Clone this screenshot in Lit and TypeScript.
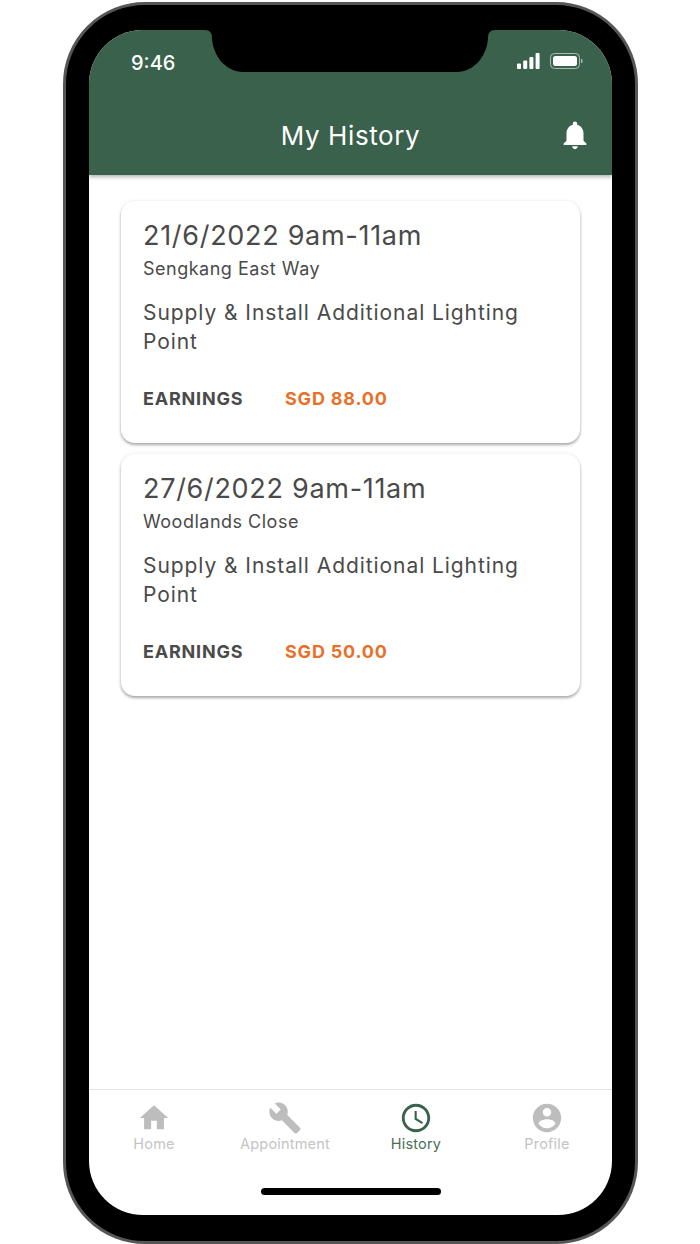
import { LitElement, html, css, svg } from 'lit';
import { customElement } from 'lit/decorators.js';

const jobs = [
  { when: '21/6/2022 9am-11am', place: 'Sengkang East Way', desc: 'Supply & Install Additional Lighting Point', pay: 'SGD 88.00' },
  { when: '27/6/2022 9am-11am', place: 'Woodlands Close', desc: 'Supply & Install Additional Lighting Point', pay: 'SGD 50.00' },
];

const tabs = [
  { label: 'Home', icon: svg`<path d="M10 20v-6h4v6h5v-8h3L12 3 2 12h3v8z"/>` },
  { label: 'Appointment', icon: svg`<path d="M22.7 19l-9.1-9.1c.9-2.3.4-5-1.5-6.9-2-2-5-2.4-7.4-1.3L9 6 6 9 1.6 4.7C.4 7.1.9 10.1 2.9 12.1c1.9 1.9 4.6 2.4 6.9 1.5l9.1 9.1c.4.4 1 .4 1.4 0l2.3-2.3c.5-.4.5-1.1.1-1.4z"/>` },
  { label: 'History', active: true, icon: svg`<path d="M11.99 2C6.47 2 2 6.48 2 12s4.47 10 9.99 10C17.52 22 22 17.52 22 12S17.52 2 11.99 2zM12 20c-4.42 0-8-3.58-8-8s3.58-8 8-8 8 3.58 8 8-3.58 8-8 8zm.5-13H11v6l5.25 3.15.75-1.23-4.5-2.67z"/>` },
  { label: 'Profile', icon: svg`<path d="M12 2C6.48 2 2 6.48 2 12s4.48 10 10 10 10-4.48 10-10S17.52 2 12 2zm0 3c1.66 0 3 1.34 3 3s-1.34 3-3 3-3-1.34-3-3 1.34-3 3-3zm0 14.2c-2.5 0-4.71-1.28-6-3.22.03-1.99 4-3.08 6-3.08 1.99 0 5.97 1.09 6 3.08-1.29 1.94-3.5 3.22-6 3.22z"/>` },
];

@customElement('app-root')
export class AppRoot extends LitElement {
  static styles = css`
    :host {
      display: block;
      width: 700px;
      height: 1244px;
      background: #fff;
      font-family: Inter, Roboto, "Liberation Sans", sans-serif;
      overflow: hidden;
    }
    .phone {
      box-sizing: border-box;
      width: 575px;
      height: 1242px;
      margin: 2px 0 0 63px;
      padding: 25px 23px 0 23px;
      background: #000;
      border: 3px solid #565656;
      border-radius: 82px;
    }
    .screen {
      position: relative;
      height: 1185px;
      border-radius: 54px;
      overflow: hidden;
      background: #fff;
      display: flex;
      flex-direction: column;
    }
    .notch {
      position: absolute;
      top: 0;
      left: 116px;
      width: 290px;
      height: 42px;
      fill: #000;
      z-index: 2;
    }
    .header {
      background: #3a614b;
      height: 145px;
      flex: none;
      color: #fff;
      box-shadow: 0 2px 4px rgba(0, 0, 0, 0.3);
      display: flex;
      flex-direction: column;
      z-index: 1;
    }
    .status {
      height: 62px;
      padding: 21px 29px 0 42px;
      box-sizing: border-box;
      display: flex;
      justify-content: space-between;
      align-items: flex-start;
      font-size: 20px;
      font-weight: 500;
    }
    .status-icons {
      display: flex;
      gap: 10px;
      padding-top: 2px;
    }
    .title-row {
      position: relative;
      text-align: center;
      font-size: 26px;
      letter-spacing: 0.6px;
      line-height: 32px;
      padding-top: 28px;
    }
    .bell {
      position: absolute;
      right: 20px;
      top: 26px;
      width: 34px;
      height: 34px;
      fill: #fff;
    }
    .list {
      flex: 1;
      padding: 26px 32px 0 32px;
      display: flex;
      flex-direction: column;
      gap: 11px;
    }
    .card {
      background: #fff;
      border-radius: 14px;
      padding: 19px 22px 0 22px;
      height: 242px;
      box-sizing: border-box;
      color: #4a4a4a;
      box-shadow: 0 2px 3px rgba(0, 0, 0, 0.32), 0 0 4px rgba(0, 0, 0, 0.07);
    }
    .when {
      font-size: 27px;
      line-height: 32px;
      letter-spacing: 0.7px;
    }
    .place {
      font-size: 18px;
      line-height: 22px;
      letter-spacing: 0.5px;
      margin-top: 6px;
    }
    .desc {
      font-size: 21px;
      line-height: 29px;
      letter-spacing: 0.93px;
      margin-top: 17.5px;
    }
    .earn {
      display: flex;
      margin-top: 32px;
      font-size: 18px;
      line-height: 22px;
      font-weight: 700;
      letter-spacing: 0.8px;
    }
    .earn-label {
      width: 142px;
    }
    .pay {
      color: #e8702a;
    }
    .nav {
      height: 126px;
      flex: none;
      border-top: 1px solid #e4e4e4;
      box-sizing: border-box;
      display: grid;
      grid-template-columns: repeat(4, 131px);
      justify-content: center;
      padding-top: 11px;
      position: relative;
    }
    .tab {
      display: flex;
      flex-direction: column;
      align-items: center;
      color: #c4c4c4;
      font-size: 14.5px;
      letter-spacing: 0.2px;
    }
    .tab svg {
      width: 34px;
      height: 34px;
      fill: #bdbdbd;
    }
    .tab.active {
      color: #4a7059;
    }
    .tab.active svg {
      fill: #3a614b;
    }
    .tab span {
      line-height: 18px;
    }
    .home-bar {
      position: absolute;
      left: 172px;
      bottom: 20px;
      width: 180px;
      height: 7px;
      border-radius: 4px;
      background: #000;
    }
  `;

  render() {
    return html`
      <div class="phone">
        <div class="screen">
          <div class="header">
            <div class="status">
              <span>9:46</span>
              <div class="status-icons">
                <svg width="24" height="17" viewBox="0 0 24 17" fill="#fff">
                  <rect x="1" y="10.5" width="4" height="5.5" rx="1" />
                  <rect x="7.2" y="7.5" width="4" height="8.5" rx="1" />
                  <rect x="13.4" y="4" width="4" height="12" rx="1" />
                  <rect x="19.6" y="0" width="4" height="16" rx="1" />
                </svg>
                <svg width="33" height="17" viewBox="0 0 33 17">
                  <rect x="0.5" y="0.5" width="29" height="15" rx="4" fill="none" stroke="#a9bcb0" />
                  <rect x="3" y="3" width="24" height="10" rx="2.5" fill="#fff" />
                  <rect x="31" y="6" width="1.5" height="4" rx="0.7" fill="#a9bcb0" />
                </svg>
              </div>
            </div>
            <div class="title-row">
              My History
              <svg class="bell" viewBox="0 0 24 24">
                <path d="M12 22c1.1 0 2-.9 2-2h-4c0 1.1.9 2 2 2zm6-6v-5c0-3.07-1.63-5.64-4.5-6.32V4c0-.83-.67-1.5-1.5-1.5s-1.5.67-1.5 1.5v.68C7.64 5.36 6 7.92 6 11v5l-2 2v1h16v-1l-2-2z" />
              </svg>
            </div>
          </div>
          <div class="list">
            ${jobs.map(
              (j) => html`
                <div class="card">
                  <div class="when">${j.when}</div>
                  <div class="place">${j.place}</div>
                  <div class="desc">${j.desc}</div>
                  <div class="earn">
                    <span class="earn-label">EARNINGS</span>
                    <span class="pay">${j.pay}</span>
                  </div>
                </div>
              `
            )}
          </div>
          <div class="nav">
            ${tabs.map(
              (t) => html`
                <div class="tab ${t.active ? 'active' : ''}">
                  <svg viewBox="0 0 24 24">${t.icon}</svg>
                  <span>${t.label}</span>
                </div>
              `
            )}
            <div class="home-bar"></div>
          </div>
          <svg class="notch" viewBox="0 0 290 42">
            <path d="M0 0H290C285 0 283 3 283 8C282 27 268 42 252 42H38C22 42 8 27 7 8C7 3 5 0 0 0Z" />
          </svg>
        </div>
      </div>
    `;
  }
}
